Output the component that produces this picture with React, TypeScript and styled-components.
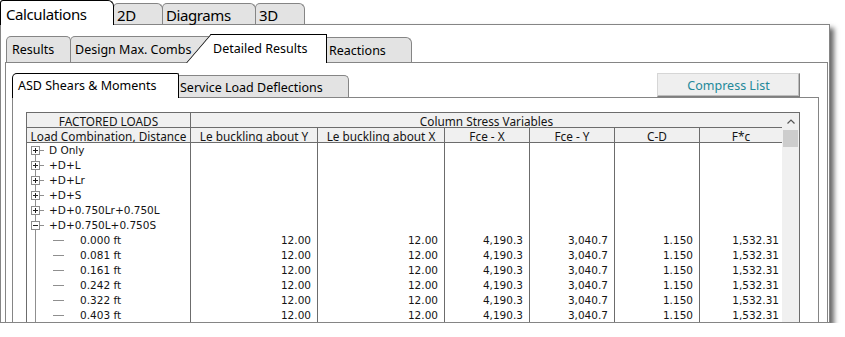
import React from 'react';
import styled, { createGlobalStyle, css } from 'styled-components';

const LINE = '#858585';
const GRID = '#6c6c6c';
const INK = '#141414';
const TREE = '#8f8f8f';
const TAB_BG = '#e3e3e3';
const UI_FONT = '"Noto Sans", "Open Sans", sans-serif';
const DATA_FONT = '"DejaVu Sans", "Liberation Sans", sans-serif';

const GlobalStyle = createGlobalStyle`
  html, body { margin: 0; padding: 0; background: #ffffff; }
  body { font-family: ${UI_FONT}; }
`;

const Window = styled.div`
  width: 830px;
  display: flex;
  flex-direction: column;
`;

/* ---------- level 1 tabs ---------- */
const TopStrip = styled.div`
  display: flex;
  align-items: flex-end;
  height: 24px;
  position: relative;
  z-index: 2;
`;

const TopTab = styled.div<{ $active?: boolean; $w: number }>`
  box-sizing: border-box;
  flex: none;
  width: ${p => p.$w}px;
  display: flex;
  align-items: center;
  font-family: ${UI_FONT};
  font-size: 15px;
  letter-spacing: -0.4px;
  color: #000;
  white-space: nowrap;
  border: 1px solid ${LINE};
  border-bottom: none;
  & + & { margin-left: -1px; }
  ${p => p.$active
    ? css`
        position: relative;
        z-index: 1;
        height: 25px;
        margin-bottom: -1px;
        background: #fff;
        border-color: #000;
        border-radius: 3px 6px 0 0;
        padding: 2px 0 0 5px;
      `
    : css`
        height: 21px;
        background: ${TAB_BG};
        border-radius: 5px 6px 0 0;
        padding: 2px 0 0 3px;
      `}
`;

const MainPanel = styled.div`
  box-sizing: border-box;
  height: 299px;
  border: 1px solid ${LINE};
  background: #fff;
  overflow: hidden;
  box-shadow: 4px 4px 5px rgba(0, 0, 0, 0.6);
  padding: 9px 1px 0 4px;
  display: flex;
  flex-direction: column;
`;

/* ---------- level 2 tabs ---------- */
const SubStrip = styled.div`
  display: flex;
  align-items: flex-end;
  height: 28px;
  padding-left: 1px;
  position: relative;
  z-index: 2;
  flex: none;
`;

const SubTab = styled.div<{ $w: number; $pl: number; $radius: string; $ml?: number; $h?: number }>`
  box-sizing: border-box;
  flex: none;
  width: ${p => p.$w}px;
  height: ${p => p.$h ?? 26}px;
  margin-left: ${p => p.$ml ?? 0}px;
  padding-left: ${p => p.$pl}px;
  display: flex;
  align-items: center;
  background: ${TAB_BG};
  border: 1px solid ${LINE};
  border-bottom: none;
  border-radius: ${p => p.$radius};
  font-family: ${UI_FONT};
  font-size: 12.5px;
  color: #000;
  white-space: nowrap;
`;

const SlantTab = styled.div`
  position: relative;
  z-index: 1;
  box-sizing: border-box;
  flex: none;
  width: 141px;
  height: 29px;
  margin-left: -45px;
  margin-bottom: -1px;
  padding: 0 0 1px 27px;
  display: flex;
  align-items: center;
  font-family: ${UI_FONT};
  font-size: 12.5px;
  color: #000;
  white-space: nowrap;
  &::before {
    content: '';
    position: absolute;
    z-index: -1;
    left: 0;
    top: 0;
    bottom: 0;
    width: 60px;
    background: #fff;
    border-left: 1px solid #000;
    border-top: 1px solid #000;
    transform-origin: bottom left;
    transform: skewX(-40.6deg);
  }
  &::after {
    content: '';
    position: absolute;
    z-index: -1;
    left: 30px;
    right: 0;
    top: 0;
    bottom: 0;
    background: #fff;
    border-top: 1px solid #000;
    border-right: 1px solid #000;
  }
`;

const SubPanel = styled.div`
  flex: 1;
  box-sizing: border-box;
  border: 1px solid ${LINE};
  border-bottom: none;
  padding: 10px 8px 0 6px;
  display: flex;
  flex-direction: column;
  min-height: 0;
`;

/* ---------- level 3 tabs ---------- */
const InnerStrip = styled.div`
  display: flex;
  align-items: flex-end;
  height: 24px;
  position: relative;
  z-index: 2;
  flex: none;
`;

const InnerTab = styled.div<{ $active?: boolean; $w: number }>`
  box-sizing: border-box;
  flex: none;
  width: ${p => p.$w}px;
  display: flex;
  align-items: center;
  font-family: ${UI_FONT};
  font-size: 12.5px;
  color: #000;
  white-space: nowrap;
  border: 1px solid ${LINE};
  border-bottom: none;
  & + & { margin-left: -1px; }
  ${p => p.$active
    ? css`
        position: relative;
        z-index: 1;
        height: 25px;
        margin-bottom: -1px;
        background: #fff;
        border-color: #000;
        border-radius: 5px 2px 0 0;
        padding: 0 0 1px 5px;
      `
    : css`
        height: 22px;
        background: ${TAB_BG};
        border-radius: 2px 5px 0 0;
        padding: 2px 0 0 1px;
      `}
`;

const CompressButton = styled.button`
  box-sizing: border-box;
  flex: none;
  align-self: stretch;
  width: 143px;
  margin: 0 19px 0 auto;
  padding: 0;
  background: #efefef;
  border: 1px solid;
  border-color: #d6d6d6 #7f7f7f #7f7f7f #d6d6d6;
  box-shadow: inset -1px -1px 0 #bdbdbd;
  font-family: ${UI_FONT};
  font-size: 12.5px;
  color: #23899a;
  text-align: center;
`;

const InnerPanel = styled.div`
  flex: 1;
  box-sizing: border-box;
  border: 1px solid ${LINE};
  border-bottom: none;
  padding: 14px 18px 0 13px;
  display: flex;
  flex-direction: column;
  min-height: 0;
`;

/* ---------- table ---------- */
const TableFrame = styled.div`
  box-sizing: border-box;
  width: 774px;
  flex: 1;
  display: flex;
  border: 1px solid ${GRID};
  border-bottom: none;
  background: #fff;
`;

const Grid = styled.div`
  flex: none;
  width: 755px;
  display: grid;
  grid-template-columns: 164px 127px 127px 85px 85px 85px 82px;
  grid-auto-rows: 15px;
  align-content: start;
`;

const HeadCell = styled.div<{ $span?: number; $divider?: boolean }>`
  grid-column: span ${p => p.$span ?? 1};
  box-sizing: border-box;
  background: #f0f0f0;
  border-bottom: 1px solid ${GRID};
  border-right: ${p => (p.$divider ? `1px solid ${GRID}` : 'none')};
  font-family: ${UI_FONT};
  font-size: 11.8px;
  line-height: 14px;
  padding-top: 1px;
  text-align: center;
  color: ${INK};
  white-space: nowrap;
  overflow: hidden;
`;

const TreeCell = styled.div<{ $first?: boolean }>`
  position: relative;
  box-sizing: border-box;
  display: flex;
  align-items: center;
  border-right: 1px solid ${GRID};
  font-family: ${DATA_FONT};
  font-size: 10.5px;
  color: ${INK};
  white-space: nowrap;
  overflow: hidden;
  &::before {
    content: '';
    position: absolute;
    left: 8px;
    width: 1px;
    top: ${p => (p.$first ? '7px' : '0')};
    bottom: 0;
    background: ${TREE};
  }
`;

const Expander = styled.span<{ $open?: boolean }>`
  position: relative;
  flex: none;
  box-sizing: border-box;
  width: 9px;
  height: 9px;
  margin-left: 4px;
  margin-top: -1px;
  border: 1px solid #8d8d8d;
  background: #fff;
  &::before {
    content: '';
    position: absolute;
    left: 1px;
    top: 3px;
    width: 5px;
    height: 1px;
    background: #222;
  }
  &::after {
    content: '';
    position: absolute;
    left: 3px;
    top: 1px;
    width: 1px;
    height: 5px;
    background: #222;
    display: ${p => (p.$open ? 'none' : 'block')};
  }
`;

const Connector = styled.span<{ $ml: number; $w: number }>`
  flex: none;
  height: 1px;
  margin-top: -1px;
  width: ${p => p.$w}px;
  margin-left: ${p => p.$ml}px;
  background: ${TREE};
`;

const NodeLabel = styled.span<{ $ml: number }>`
  margin-left: ${p => p.$ml}px;
  line-height: 15px;
`;

const ValueCell = styled.div<{ $last?: boolean }>`
  box-sizing: border-box;
  border-right: ${p => (p.$last ? 'none' : `1px solid ${GRID}`)};
  padding-right: ${p => (p.$last ? 3 : 6)}px;
  font-family: ${DATA_FONT};
  font-size: 10.5px;
  line-height: 15px;
  text-align: right;
  color: ${INK};
  white-space: nowrap;
`;

const ScrollBar = styled.div`
  flex: none;
  width: 17px;
  background: #f0f0f0;
  display: flex;
  flex-direction: column;
  align-items: center;
`;

const ScrollArrow = styled.div`
  width: 17px;
  height: 17px;
  display: flex;
  align-items: center;
  justify-content: center;
`;

const ScrollThumb = styled.div`
  width: 15px;
  height: 17px;
  background: #cdcdcd;
`;

type Row =
  | { kind: 'root'; label: string; open?: boolean }
  | { kind: 'child'; label: string; values: string[] };

const childValues = ['12.00', '12.00', '4,190.3', '3,040.7', '1.150', '1,532.31'];

const rows: Row[] = [
  { kind: 'root', label: 'D Only' },
  { kind: 'root', label: '+D+L' },
  { kind: 'root', label: '+D+Lr' },
  { kind: 'root', label: '+D+S' },
  { kind: 'root', label: '+D+0.750Lr+0.750L' },
  { kind: 'root', label: '+D+0.750L+0.750S', open: true },
  ...['0.000', '0.081', '0.161', '0.242', '0.322', '0.403'].map(
    d => ({ kind: 'child', label: `${d} ft`, values: childValues } as Row)
  ),
];

const columns = ['Le buckling about Y', 'Le buckling about X', 'Fce - X', 'Fce - Y', 'C-D', 'F*c'];

export default function App() {
  return (
    <>
      <GlobalStyle />
      <Window>
        <TopStrip>
          <TopTab $active $w={114}>Calculations</TopTab>
          <TopTab $w={50}>2D</TopTab>
          <TopTab $w={94}>Diagrams</TopTab>
          <TopTab $w={50}>3D</TopTab>
        </TopStrip>
        <MainPanel>
          <SubStrip>
            <SubTab $w={65} $pl={5} $radius="5px 5px 0 0">Results</SubTab>
            <SubTab $w={161} $pl={4} $ml={-1} $radius="5px 0 0 0">Design Max. Combs</SubTab>
            <SlantTab>Detailed Results</SlantTab>
            <SubTab $w={86} $pl={2} $ml={-1} $h={25} $radius="0 6px 0 0">Reactions</SubTab>
          </SubStrip>
          <SubPanel>
            <InnerStrip>
              <InnerTab $active $w={167}>ASD Shears &amp; Moments</InnerTab>
              <InnerTab $w={171}>Service Load Deflections</InnerTab>
              <CompressButton type="button">Compress List</CompressButton>
            </InnerStrip>
            <InnerPanel>
              <TableFrame>
                <Grid>
                  <HeadCell $divider>FACTORED LOADS</HeadCell>
                  <HeadCell $span={6}>Column Stress Variables</HeadCell>
                  <HeadCell $divider>Load Combination, Distance</HeadCell>
                  {columns.map((c, i) => (
                    <HeadCell key={c} $divider={i < columns.length - 1}>{c}</HeadCell>
                  ))}
                  {rows.map((r, ri) => (
                    <React.Fragment key={r.label}>
                      <TreeCell $first={ri === 0}>
                        {r.kind === 'root' ? (
                          <>
                            <Expander $open={r.open} />
                            <Connector $ml={0} $w={4} />
                            <NodeLabel $ml={5}>{r.label}</NodeLabel>
                          </>
                        ) : (
                          <>
                            <Connector $ml={26} $w={11} />
                            <NodeLabel $ml={16}>{r.label}</NodeLabel>
                          </>
                        )}
                      </TreeCell>
                      {columns.map((c, ci) => (
                        <ValueCell key={c} $last={ci === columns.length - 1}>
                          {r.kind === 'child' ? r.values[ci] : ''}
                        </ValueCell>
                      ))}
                    </React.Fragment>
                  ))}
                </Grid>
                <ScrollBar>
                  <ScrollArrow>
                    <svg width="8" height="5" viewBox="0 0 8 5">
                      <polyline points="0.5,4.5 4,1 7.5,4.5" fill="none" stroke="#555" strokeWidth="1.2" />
                    </svg>
                  </ScrollArrow>
                  <ScrollThumb />
                </ScrollBar>
              </TableFrame>
            </InnerPanel>
          </SubPanel>
        </MainPanel>
      </Window>
    </>
  );
}
